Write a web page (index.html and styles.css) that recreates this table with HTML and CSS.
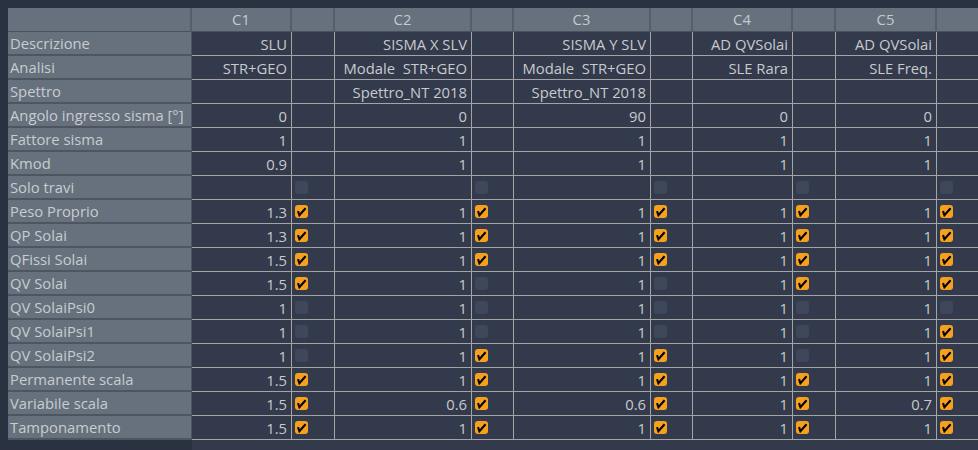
FILE: index.html
```html
<!DOCTYPE html>
<html lang="it">
<head>
<meta charset="utf-8">
<title>Combinazioni</title>
<link rel="stylesheet" href="styles.css">
</head>
<body>
<svg class="defs" aria-hidden="true">
  <symbol id="on" viewBox="0 0 13 13"><rect width="13" height="13" rx="3" fill="#f6a11e"/><path d="M3 6.2 L4.4 10.2 L10.6 3.2" fill="none" stroke="#000" stroke-width="2.1" stroke-linejoin="miter"/></symbol>
  <symbol id="off" viewBox="0 0 13 13"><rect width="13" height="13" rx="3" fill="#3f485a"/></symbol>
</svg>
<div class="grid">
  <div class="row head">
    <div class="h rh0"></div>
    <div class="h a">C1</div><div class="h ka"></div>
    <div class="h b">C2</div><div class="h kb"></div>
    <div class="h b">C3</div><div class="h kb"></div>
    <div class="h a">C4</div><div class="h ka"></div>
    <div class="h c">C5</div><div class="h kc"></div>
  </div>

  <div class="row">
    <div class="rh">Descrizione</div>
    <div class="v a">SLU</div><div class="v ka"></div>
    <div class="v b">SISMA X SLV</div><div class="v kb"></div>
    <div class="v b">SISMA Y SLV</div><div class="v kb"></div>
    <div class="v a">AD QVSolai</div><div class="v ka"></div>
    <div class="v c">AD QVSolai</div><div class="v kc"></div>
  </div>
  <div class="row">
    <div class="rh">Analisi</div>
    <div class="v a">STR+GEO</div><div class="v ka"></div>
    <div class="v b">Modale&nbsp; STR+GEO</div><div class="v kb"></div>
    <div class="v b">Modale&nbsp; STR+GEO</div><div class="v kb"></div>
    <div class="v a">SLE Rara</div><div class="v ka"></div>
    <div class="v c">SLE Freq.</div><div class="v kc"></div>
  </div>
  <div class="row">
    <div class="rh">Spettro</div>
    <div class="v a"></div><div class="v ka"></div>
    <div class="v b">Spettro_NT 2018</div><div class="v kb"></div>
    <div class="v b">Spettro_NT 2018</div><div class="v kb"></div>
    <div class="v a"></div><div class="v ka"></div>
    <div class="v c"></div><div class="v kc"></div>
  </div>
  <div class="row">
    <div class="rh">Angolo ingresso sisma [°]</div>
    <div class="v a">0</div><div class="v ka"></div>
    <div class="v b">0</div><div class="v kb"></div>
    <div class="v b">90</div><div class="v kb"></div>
    <div class="v a">0</div><div class="v ka"></div>
    <div class="v c">0</div><div class="v kc"></div>
  </div>
  <div class="row">
    <div class="rh">Fattore sisma</div>
    <div class="v a">1</div><div class="v ka"></div>
    <div class="v b">1</div><div class="v kb"></div>
    <div class="v b">1</div><div class="v kb"></div>
    <div class="v a">1</div><div class="v ka"></div>
    <div class="v c">1</div><div class="v kc"></div>
  </div>
  <div class="row">
    <div class="rh">Kmod</div>
    <div class="v a">0.9</div><div class="v ka"></div>
    <div class="v b">1</div><div class="v kb"></div>
    <div class="v b">1</div><div class="v kb"></div>
    <div class="v a">1</div><div class="v ka"></div>
    <div class="v c">1</div><div class="v kc"></div>
  </div>
  <div class="row">
    <div class="rh">Solo travi</div>
    <div class="v a"></div><div class="v k ka"><svg class="cb"><use href="#off"/></svg></div>
    <div class="v b"></div><div class="v k kb"><svg class="cb"><use href="#off"/></svg></div>
    <div class="v b"></div><div class="v k kb"><svg class="cb"><use href="#off"/></svg></div>
    <div class="v a"></div><div class="v k ka"><svg class="cb"><use href="#off"/></svg></div>
    <div class="v c"></div><div class="v k kc"><svg class="cb"><use href="#off"/></svg></div>
  </div>
  <div class="row">
    <div class="rh">Peso Proprio</div>
    <div class="v a">1.3</div><div class="v k ka"><svg class="cb"><use href="#on"/></svg></div>
    <div class="v b">1</div><div class="v k kb"><svg class="cb"><use href="#on"/></svg></div>
    <div class="v b">1</div><div class="v k kb"><svg class="cb"><use href="#on"/></svg></div>
    <div class="v a">1</div><div class="v k ka"><svg class="cb"><use href="#on"/></svg></div>
    <div class="v c">1</div><div class="v k kc"><svg class="cb"><use href="#on"/></svg></div>
  </div>
  <div class="row">
    <div class="rh">QP Solai</div>
    <div class="v a">1.3</div><div class="v k ka"><svg class="cb"><use href="#on"/></svg></div>
    <div class="v b">1</div><div class="v k kb"><svg class="cb"><use href="#on"/></svg></div>
    <div class="v b">1</div><div class="v k kb"><svg class="cb"><use href="#on"/></svg></div>
    <div class="v a">1</div><div class="v k ka"><svg class="cb"><use href="#on"/></svg></div>
    <div class="v c">1</div><div class="v k kc"><svg class="cb"><use href="#on"/></svg></div>
  </div>
  <div class="row">
    <div class="rh">QFissi Solai</div>
    <div class="v a">1.5</div><div class="v k ka"><svg class="cb"><use href="#on"/></svg></div>
    <div class="v b">1</div><div class="v k kb"><svg class="cb"><use href="#on"/></svg></div>
    <div class="v b">1</div><div class="v k kb"><svg class="cb"><use href="#on"/></svg></div>
    <div class="v a">1</div><div class="v k ka"><svg class="cb"><use href="#on"/></svg></div>
    <div class="v c">1</div><div class="v k kc"><svg class="cb"><use href="#on"/></svg></div>
  </div>
  <div class="row">
    <div class="rh">QV Solai</div>
    <div class="v a">1.5</div><div class="v k ka"><svg class="cb"><use href="#on"/></svg></div>
    <div class="v b">1</div><div class="v k kb"><svg class="cb"><use href="#off"/></svg></div>
    <div class="v b">1</div><div class="v k kb"><svg class="cb"><use href="#off"/></svg></div>
    <div class="v a">1</div><div class="v k ka"><svg class="cb"><use href="#on"/></svg></div>
    <div class="v c">1</div><div class="v k kc"><svg class="cb"><use href="#on"/></svg></div>
  </div>
  <div class="row">
    <div class="rh">QV SolaiPsi0</div>
    <div class="v a">1</div><div class="v k ka"><svg class="cb"><use href="#off"/></svg></div>
    <div class="v b">1</div><div class="v k kb"><svg class="cb"><use href="#off"/></svg></div>
    <div class="v b">1</div><div class="v k kb"><svg class="cb"><use href="#off"/></svg></div>
    <div class="v a">1</div><div class="v k ka"><svg class="cb"><use href="#off"/></svg></div>
    <div class="v c">1</div><div class="v k kc"><svg class="cb"><use href="#off"/></svg></div>
  </div>
  <div class="row">
    <div class="rh">QV SolaiPsi1</div>
    <div class="v a">1</div><div class="v k ka"><svg class="cb"><use href="#off"/></svg></div>
    <div class="v b">1</div><div class="v k kb"><svg class="cb"><use href="#off"/></svg></div>
    <div class="v b">1</div><div class="v k kb"><svg class="cb"><use href="#off"/></svg></div>
    <div class="v a">1</div><div class="v k ka"><svg class="cb"><use href="#off"/></svg></div>
    <div class="v c">1</div><div class="v k kc"><svg class="cb"><use href="#on"/></svg></div>
  </div>
  <div class="row">
    <div class="rh">QV SolaiPsi2</div>
    <div class="v a">1</div><div class="v k ka"><svg class="cb"><use href="#off"/></svg></div>
    <div class="v b">1</div><div class="v k kb"><svg class="cb"><use href="#on"/></svg></div>
    <div class="v b">1</div><div class="v k kb"><svg class="cb"><use href="#on"/></svg></div>
    <div class="v a">1</div><div class="v k ka"><svg class="cb"><use href="#off"/></svg></div>
    <div class="v c">1</div><div class="v k kc"><svg class="cb"><use href="#on"/></svg></div>
  </div>
  <div class="row">
    <div class="rh">Permanente scala</div>
    <div class="v a">1.5</div><div class="v k ka"><svg class="cb"><use href="#on"/></svg></div>
    <div class="v b">1</div><div class="v k kb"><svg class="cb"><use href="#on"/></svg></div>
    <div class="v b">1</div><div class="v k kb"><svg class="cb"><use href="#on"/></svg></div>
    <div class="v a">1</div><div class="v k ka"><svg class="cb"><use href="#on"/></svg></div>
    <div class="v c">1</div><div class="v k kc"><svg class="cb"><use href="#on"/></svg></div>
  </div>
  <div class="row">
    <div class="rh">Variabile scala</div>
    <div class="v a">1.5</div><div class="v k ka"><svg class="cb"><use href="#on"/></svg></div>
    <div class="v b">0.6</div><div class="v k kb"><svg class="cb"><use href="#on"/></svg></div>
    <div class="v b">0.6</div><div class="v k kb"><svg class="cb"><use href="#on"/></svg></div>
    <div class="v a">1</div><div class="v k ka"><svg class="cb"><use href="#on"/></svg></div>
    <div class="v c">0.7</div><div class="v k kc"><svg class="cb"><use href="#on"/></svg></div>
  </div>
  <div class="row">
    <div class="rh">Tamponamento</div>
    <div class="v a">1.5</div><div class="v k ka"><svg class="cb"><use href="#on"/></svg></div>
    <div class="v b">1</div><div class="v k kb"><svg class="cb"><use href="#on"/></svg></div>
    <div class="v b">1</div><div class="v k kb"><svg class="cb"><use href="#on"/></svg></div>
    <div class="v a">1</div><div class="v k ka"><svg class="cb"><use href="#on"/></svg></div>
    <div class="v c">1</div><div class="v k kc"><svg class="cb"><use href="#on"/></svg></div>
  </div>
  <div class="row filler">
    <div class="fl-side"></div>
    <div class="fl-data"></div>
  </div>
</div>
</body>
</html>
```
FILE: styles.css
```css
html, body {
  margin: 0;
  padding: 0;
  background: #2a3140;
  overflow: hidden;
}
body {
  width: 978px;
  height: 450px;
  font-family: "Open Sans", "Noto Sans", sans-serif;
  font-size: 14.8px;
  color: #c8cacd;
}
.defs {
  position: absolute;
  width: 0;
  height: 0;
  overflow: hidden;
}
.grid {
  padding: 8px 0 0 8px;
  display: flex;
  flex-direction: column;
  width: 970px;
  overflow: hidden;
}
.row {
  display: flex;
  height: 24px;
  flex: none;
}
.head .h {
  background: #66717d;
  border-right: 2px solid #555e6a;
  border-bottom: 1px solid #4a525e;
  box-sizing: border-box;
  text-align: center;
  line-height: 23px;
  color: #c5cad0;
  flex: none;
}
.head .rh0 {
  width: 184px;
}
.rh {
  width: 184px;
  flex: none;
  box-sizing: border-box;
  background: #66717d;
  border-right: 1px solid #4d5561;
  border-bottom: 2px solid #4d5561;
  padding-left: 2px;
  line-height: 23px;
  color: #c8ccd0;
  white-space: nowrap;
  overflow: hidden;
}
.v {
  flex: none;
  box-sizing: border-box;
  background: #323a4c;
  border-right: 1px solid #a4a4a4;
  border-bottom: 1px solid #a4a4a4;
  text-align: right;
  padding-right: 4px;
  line-height: 24px;
  white-space: nowrap;
  overflow: hidden;
}
.a { width: 100px; }
.b { width: 137px; }
.c { width: 101px; }
.ka { width: 43px; }
.kb { width: 42px; }
.kc { width: 60px; }
.k {
  display: flex;
  align-items: center;
  padding: 0 0 1px 3px;
}
.cb {
  width: 13px;
  height: 13px;
  display: block;
}
.filler {
  height: 20px;
}
.fl-side {
  width: 184px;
  flex: none;
}
.fl-data {
  flex: 1;
  background: #323a4c;
}
```
